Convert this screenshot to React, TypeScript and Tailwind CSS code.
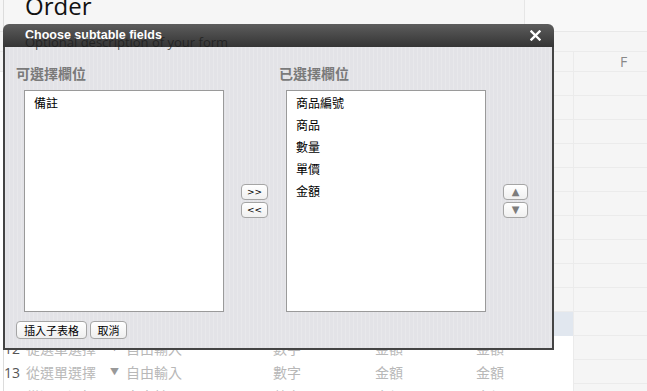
const cjk = "font-['Noto_Sans_CJK_TC','Noto_Sans',sans-serif]";

function SheetRow({
  n,
  tone,
  filled,
}: {
  n: number;
  tone: "gray" | "sel" | "white";
  filled?: boolean;
}) {
  const body =
    tone === "gray" ? "bg-[#f5f5f5] border-b border-[#ebebeb]" : tone === "sel" ? "bg-[#e1e7ef]" : "bg-white";
  return (
    <div className="flex h-[24px] items-center">
      <div className="w-[3px] h-full shrink-0" />
      <div className={`w-[20px] shrink-0 h-full flex items-center border-l border-[#dcdcdc] text-[14px] text-[#555] font-['Open_Sans',sans-serif] ${tone === "white" ? "bg-white" : ""}`}>
        {filled ? n : ""}
      </div>
      <div className={`flex h-full w-[550px] shrink-0 items-center ${body} text-[14px] text-[#b8b8b8] ${cjk}`}>
        {filled && (
          <>
            <div className="w-[83px] shrink-0 pl-[3px]">從選單選擇</div>
            <div className="w-[164px] shrink-0 flex items-center gap-[7px] pl-[4px]">
              <span className="text-[9px] text-[#999]">▼</span>
              <span>自由輸入</span>
            </div>
            <div className="w-[103px] shrink-0 pl-[3px]">數字</div>
            <div className="w-[100px] shrink-0 pl-[2px]">金額</div>
            <div className="w-[100px] shrink-0 pl-[3px]">金額</div>
          </>
        )}
      </div>
      <div className="h-full w-[100px] shrink-0 bg-[#f5f5f5] border-l border-b border-[#ebebeb]" />
    </div>
  );
}

function SmallButton({ children, wide }: { children: React.ReactNode; wide?: boolean }) {
  return (
    <button
      className={`${wide ? "w-[27px]" : "w-[25px]"} h-[16px] flex items-center justify-center rounded-[4px] border border-[#a5a5a5] bg-gradient-to-b from-white to-[#f0f0f0] text-[9px] leading-none text-black font-['DejaVu_Sans',sans-serif]`}
    >
      {children}
    </button>
  );
}

export default function App() {
  const chosen = ["商品編號", "商品", "數量", "單價", "金額"];
  const rows = Array.from({ length: 14 }, (_, i) => i + 1);

  return (
    <div className="relative w-[647px] h-[391px] overflow-hidden bg-white">
      {/* spreadsheet page behind the dialog */}
      <div className="flex flex-col">
        <div className="flex h-[32px] border-b border-[#e8e8e8] bg-[#f6f6f6]">
          <div className="w-[521px] shrink-0 border-l border-[#dcdcdc] ml-[3px] pl-[21px] overflow-hidden">
            <div className="-mt-[6px] text-[24px] leading-none text-[#111] font-['Open_Sans',sans-serif]">Order</div>
          </div>
          <div className="w-[123px] shrink-0 border-l border-[#e6e6e6] bg-[#f8f8f8]" />
        </div>
        <div className="h-[20px] border-b border-[#ebebeb] bg-[#f5f5f5] pl-[25px] pt-[1px]">
          <div className="relative z-20 text-[13px] leading-[18px] text-[rgba(25,25,25,0.72)] font-['Open_Sans',sans-serif]">
            Optional description of your form
          </div>
        </div>
        <div className="flex h-[20px] border-b border-[#ebebeb] bg-[#f5f5f5]">
          <div className="w-[573px] shrink-0" />
          <div className="w-[100px] shrink-0 border-l border-[#ebebeb] flex items-center justify-center text-[14px] text-[#888] font-['Open_Sans',sans-serif]">
            F
          </div>
        </div>
        {rows.map((n) => (
          <SheetRow key={n} n={n} tone={n <= 10 ? "gray" : n === 11 ? "sel" : "white"} filled={n >= 12} />
        ))}
      </div>

      {/* modal dialog */}
      <div className="absolute left-[3px] top-[24px] z-10 w-[551px]">
        <div className="flex h-[23px] items-center justify-between rounded-t-[6px] bg-gradient-to-b from-[#5d5d5d] to-[#353535] pl-[22px] pr-[13px]">
          <span className="text-[12.5px] font-bold text-white font-['Liberation_Sans',Arial,sans-serif]">
            Choose subtable fields
          </span>
          <svg width="11" height="11" viewBox="0 0 11 11">
            <path d="M1.5 1.5 L9.5 9.5 M9.5 1.5 L1.5 9.5" stroke="white" strokeWidth="2.4" strokeLinecap="square" />
          </svg>
        </div>
        <div className="h-[303px] border-2 border-t-0 border-[#444] bg-[#e3e3e7] bg-[repeating-linear-gradient(90deg,rgba(255,255,255,0.18)_0px,rgba(255,255,255,0.18)_1px,transparent_1px,transparent_4px)] pl-[11px] pt-[16px]">
          <div className="flex">
            <div className="w-[207px]">
              <div className={`h-[20px] leading-[20px] text-[14px] font-bold text-[#7a7a7a] ${cjk}`}>可選擇欄位</div>
              <div className={`ml-[8px] mt-[7px] h-[222px] w-[200px] border border-[#9a9a9a] bg-white pl-[9px] pt-[1px] text-[12px] text-black ${cjk}`}>
                <div className="h-[22px] leading-[22px]">備註</div>
              </div>
            </div>
            <div className="w-[56px] pl-[18px] pt-[121px] flex flex-col gap-[2px]">
              <SmallButton wide>&gt;&gt;</SmallButton>
              <SmallButton wide>&lt;&lt;</SmallButton>
            </div>
            <div className="w-[206px]">
              <div className={`h-[20px] leading-[20px] text-[14px] font-bold text-[#7a7a7a] ${cjk}`}>已選擇欄位</div>
              <div className={`ml-[7px] mt-[7px] h-[222px] w-[200px] border border-[#9a9a9a] bg-white pl-[9px] pt-[1px] text-[12px] text-black ${cjk}`}>
                {chosen.map((c) => (
                  <div key={c} className="h-[22px] leading-[22px]">
                    {c}
                  </div>
                ))}
              </div>
            </div>
            <div className="pl-[18px] pt-[121px] flex flex-col gap-[2px]">
              <SmallButton>
                <span className="text-[#7c7c7c] text-[10px]">▲</span>
              </SmallButton>
              <SmallButton>
                <span className="text-[#7c7c7c] text-[10px]">▼</span>
              </SmallButton>
            </div>
          </div>
          <div className={`mt-[9px] flex gap-[3px] text-[11px] text-black ${cjk}`}>
            <button className="h-[18px] w-[71px] rounded-[4px] border border-[#a5a5a5] bg-gradient-to-b from-white to-[#efefef] leading-none">
              插入子表格
            </button>
            <button className="h-[18px] w-[37px] rounded-[4px] border border-[#a5a5a5] bg-gradient-to-b from-white to-[#efefef] leading-none">
              取消
            </button>
          </div>
        </div>
      </div>
    </div>
  );
}
